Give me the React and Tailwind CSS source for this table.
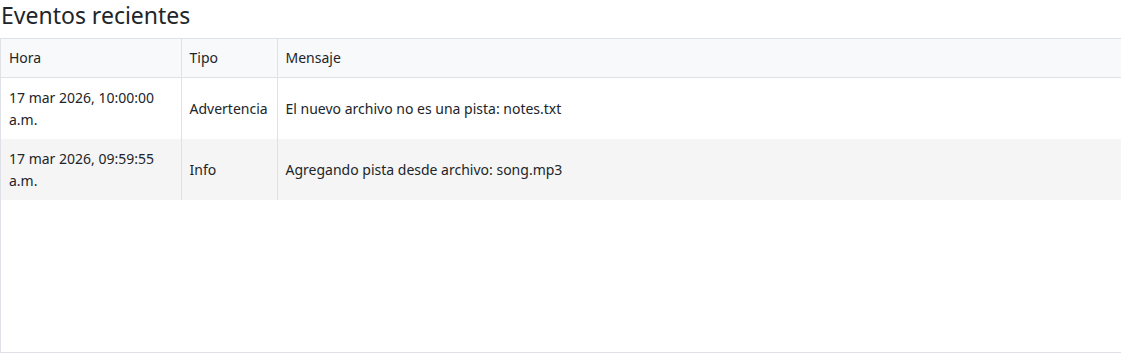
import React from 'react'

const events = [
  { time: '17 mar 2026, 10:00:00 a.m.', type: 'Advertencia', message: 'El nuevo archivo no es una pista: notes.txt' },
  { time: '17 mar 2026, 09:59:55 a.m.', type: 'Info', message: 'Agregando pista desde archivo: song.mp3' },
]

export default function App() {
  return (
    <div className="bg-white text-[#212529] font-['Segoe_UI','Noto_Sans',sans-serif]">
      <h2 className="text-[23px] leading-[30px] pl-[1px] h-[38px]">Eventos recientes</h2>
      <div className="h-[315px] border-l border-t border-b border-[#dee2e6]">
        <table className="w-full border-collapse text-[14px]">
          <thead>
            <tr className="bg-[#f8f9fa] h-[38px] border-b border-[#dee2e6]">
              <th className="w-[180px] px-2 text-left font-normal border-r border-[#dee2e6]">Hora</th>
              <th className="w-[96px] px-2 text-left font-normal border-r border-[#dee2e6]">Tipo</th>
              <th className="px-2 text-left font-normal">Mensaje</th>
            </tr>
          </thead>
          <tbody>
            {events.map((ev, i) => (
              <tr key={i} className={i % 2 === 1 ? 'bg-[#f5f5f5] h-[61px]' : 'bg-white h-[61px]'}>
                <td className="px-2 pt-[9px] pb-2 leading-[22px] border-r border-[#dee2e6]">{ev.time}</td>
                <td className="px-2 pt-[9px] pb-2 border-r border-[#dee2e6]">{ev.type}</td>
                <td className="px-2 pt-[9px] pb-2">{ev.message}</td>
              </tr>
            ))}
          </tbody>
        </table>
      </div>
    </div>
  )
}
